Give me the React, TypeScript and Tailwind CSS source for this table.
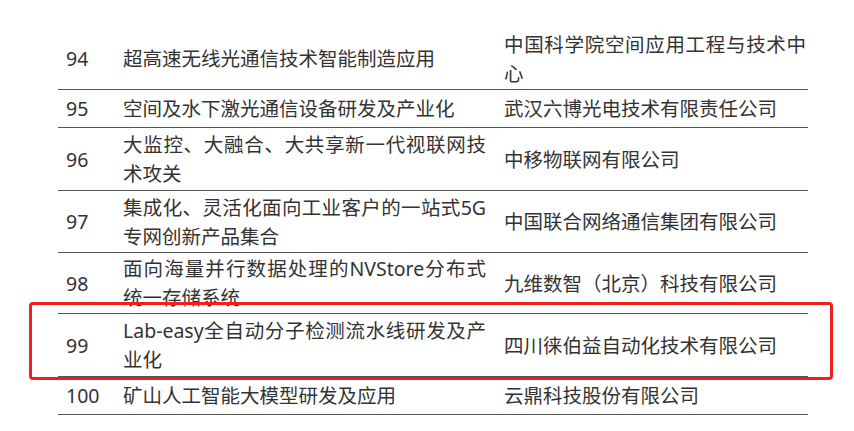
import React from "react";

type Row = { n: string; p: string; c: string; h: string };

const rows: Row[] = [
  { n: "94", p: "超高速无线光通信技术智能制造应用", c: "中国科学院空间应用工程与技术中心", h: "h-[62px]" },
  { n: "95", p: "空间及水下激光通信设备研发及产业化", c: "武汉六博光电技术有限责任公司", h: "h-[38px]" },
  { n: "96", p: "大监控、大融合、大共享新一代视联网技术攻关", c: "中移物联网有限公司", h: "h-[63px]" },
  { n: "97", p: "集成化、灵活化面向工业客户的一站式5G专网创新产品集合", c: "中国联合网络通信集团有限公司", h: "h-[62px]" },
  { n: "98", p: "面向海量并行数据处理的NVStore分布式统一存储系统", c: "九维数智（北京）科技有限公司", h: "h-[61px]" },
  { n: "99", p: "Lab-easy全自动分子检测流水线研发及产业化", c: "四川徕伯益自动化技术有限公司", h: "h-[63px]" },
  { n: "100", p: "矿山人工智能大模型研发及应用", c: "云鼎科技股份有限公司", h: "h-[38px]" },
];

export default function App() {
  return (
    <div
      className="relative w-[854px] h-[431px] bg-white overflow-hidden pt-[28px] text-[#333] text-[19.5px] leading-[29px]"
      style={{ fontFamily: '"Noto Sans", "Noto Sans CJK SC", sans-serif' }}
    >
      <div className="ml-[58px] w-[750px] flex flex-col">
        {rows.map((r) => (
          <div key={r.n} className={`flex items-center border-b border-[#555] ${r.h}`}>
            <div className="w-[57px] pl-[8px] shrink-0">{r.n}</div>
            <div className="w-[381px] pl-[8px] pr-[10px] shrink-0 text-justify">{r.p}</div>
            <div className="w-[312px] pl-[8px] pr-[2px] shrink-0 text-justify">{r.c}</div>
          </div>
        ))}
      </div>
      <div className="absolute left-[29px] top-[302px] w-[804px] h-[78px] border-[3px] border-[#f21d1d] rounded-[4px]" />
    </div>
  );
}
